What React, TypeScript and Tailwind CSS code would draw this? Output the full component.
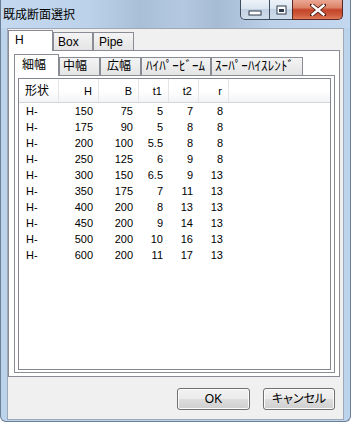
import React from "react";

const rows: string[][] = [
  ["150", "75", "5", "7", "8"],
  ["175", "90", "5", "8", "8"],
  ["200", "100", "5.5", "8", "8"],
  ["250", "125", "6", "9", "8"],
  ["300", "150", "6.5", "9", "13"],
  ["350", "175", "7", "11", "13"],
  ["400", "200", "8", "13", "13"],
  ["450", "200", "9", "14", "13"],
  ["500", "200", "10", "16", "13"],
  ["600", "200", "11", "17", "13"],
];

function WinButtons() {
  return (
    <div className="flex h-[20px] mr-[7px]">
      <div className="w-[30px] h-[20px] border border-t-0 border-[#3f4d60] rounded-bl-[5px] bg-[linear-gradient(#edf2f8_0%,#dbe5f0_45%,#c3d2e3_50%,#cfdcea_100%)] flex items-center justify-center">
        <svg width="14" height="6" viewBox="0 0 14 6" className="mt-[6px]">
          <rect x="1" y="1" width="12" height="4" fill="#ffffff" stroke="#2f3b4c" strokeWidth="1" />
        </svg>
      </div>
      <div className="w-[22px] h-[20px] border-b border-[#3f4d60] bg-[linear-gradient(#edf2f8_0%,#dbe5f0_45%,#c3d2e3_50%,#cfdcea_100%)] flex items-center justify-center">
        <svg width="11" height="10" viewBox="0 0 11 10">
          <rect x="0.5" y="0.5" width="10" height="9" fill="#2f3b4c" />
          <rect x="1.5" y="1.5" width="8" height="7" fill="#ffffff" />
          <rect x="3" y="4" width="5" height="3" fill="#2f3b4c" />
        </svg>
      </div>
      <div className="w-[51px] h-[20px] border border-t-0 border-[#5a2a22] rounded-br-[5px] bg-[linear-gradient(#eba895_0%,#dc8267_40%,#c44529_52%,#cf5a3c_80%,#e07c5c_100%)] flex items-center justify-center">
        <svg width="16" height="12" viewBox="0 0 16 12">
          <path d="M2 1 L14 11 M14 1 L2 11" stroke="#4a1c14" strokeWidth="4" strokeLinecap="square" />
          <path d="M2.5 1.5 L13.5 10.5 M13.5 1.5 L2.5 10.5" stroke="#ffffff" strokeWidth="2.4" strokeLinecap="square" />
        </svg>
      </div>
    </div>
  );
}

function OuterTab({ label, selected, w, pl }: { label: string; selected?: boolean; w: string; pl: string }) {
  if (selected) {
    return (
      <div className={`${w} h-[21px] -mb-px relative z-10 border border-b-0 border-[#898c95] bg-white pt-[2px] ${pl} leading-[14px] text-[12px]`}>
        {label}
      </div>
    );
  }
  return (
    <div className={`${w} h-[18px] border border-b-0 border-[#898c95] bg-[linear-gradient(#f4f4f4,#e4e4e4)] pt-[2px] ${pl} leading-[14px] text-[12px]`}>
      {label}
    </div>
  );
}

function InnerTab({ label, selected, w, pl, extra = "text-[12px]" }: { label: string; selected?: boolean; w: string; pl: string; extra?: string }) {
  if (selected) {
    return (
      <div className={`${w} h-[22px] -mb-px relative z-10 border border-b-0 border-[#898c95] bg-white pt-[3px] ${pl} leading-[14px] text-[12px] whitespace-nowrap`}>
        {label}
      </div>
    );
  }
  return (
    <div className={`${w} h-[18px] border border-b-0 border-[#898c95] bg-[linear-gradient(#f4f4f4,#e4e4e4)] ${pl} ${extra} leading-[16px] whitespace-nowrap overflow-hidden`}>
      {label}
    </div>
  );
}

function ListView() {
  const cols = ["w-[40px]", "w-[40px]", "w-[40px]", "w-[30px]", "w-[30px]", "w-[30px]"];
  const heads = ["形状", "H", "B", "t1", "t2", "r"];
  return (
    <div className="w-[313px] h-[292px] border border-[#828790] bg-white flex flex-col overflow-hidden">
      <div className="h-[24px] flex border-b border-[#d5d5d5] bg-[linear-gradient(#ffffff_0%,#ffffff_50%,#f3f4f6_100%)]">
        {heads.map((h, i) => (
          <div
            key={h}
            className={`${cols[i]} h-full border-r border-[#e3e5e8] pt-[5px] leading-[14px] ${
              i === 0 ? "pl-[6px] text-[12px]" : "text-right pr-[6px] text-[11px]"
            }`}
          >
            {h}
          </div>
        ))}
        <div className="flex-1" />
      </div>
      {rows.map((r, ri) => (
        <div key={ri} className="h-[16px] flex leading-[16px] text-[11px]">
          <div className={`${cols[0]} pl-[7px]`}>H-</div>
          {r.map((v, i) => (
            <div key={i} className={`${cols[i + 1]} text-right pr-[6px]`}>
              {v}
            </div>
          ))}
        </div>
      ))}
    </div>
  );
}

function Button({ label, w }: { label: string; w: string }) {
  return (
    <div
      className={`${w} h-[22px] rounded-[3px] border border-[#707070] bg-[linear-gradient(#f2f2f2_0%,#ebebeb_48%,#dddddd_52%,#cfcfcf_100%)] shadow-[inset_0_0_0_1px_#fcfcfc] flex items-center justify-center text-[12px] leading-[14px]`}
    >
      {label}
    </div>
  );
}

export default function App() {
  return (
    <div className="w-[351px] h-[422px] overflow-hidden flex flex-col border-x border-b border-[#6a7f98] rounded-b-[6px] bg-[#bcd3ec] font-['Liberation_Sans','Noto_Sans_CJK_JP',sans-serif] text-black [font-feature-settings:'palt']">
      <div className="h-[28px] flex justify-between bg-[linear-gradient(90deg,#c4d9ef_0%,#bcd2ea_25%,#a9bfd8_40%,#b4c9e1_52%,#a6bbd4_62%,#bdd2ea_78%,#c3d8ef_100%)]">
        <div className="pl-[2px] pt-[8px] leading-[14px] text-[12px] [font-feature-settings:normal]">既成断面選択</div>
        <WinButtons />
      </div>
      <div className="flex-1 flex flex-col px-[6px] pb-[1px]">
        <div className="flex-1 border border-[#9ea8b6] bg-[#f0f0f0] flex flex-col pt-[1px]">
          <div className="h-[20px] flex items-end">
            <OuterTab label="H" selected w="w-[45px]" pl="pl-[6px]" />
            <OuterTab label="Box" w="w-[40px]" pl="pl-[4px]" />
            <OuterTab label="Pipe" w="w-[41px]" pl="pl-[5px]" />
          </div>
          <div className="w-[332px] h-[327px] border border-[#898c95] bg-white flex flex-col pt-[3px] pl-[5px]">
            <div className="h-[21px] flex items-end">
              <InnerTab label="細幅" selected w="w-[45px]" pl="pl-[7px]" />
              <InnerTab label="中幅" w="w-[41px]" pl="pl-[3px]" />
              <InnerTab label="広幅" w="w-[41px]" pl="pl-[6px]" />
              <InnerTab label="ﾊｲﾊﾟｰﾋﾞｰﾑ" w="w-[70px]" pl="pl-[4px]" extra="text-[13px] tracking-[0.1px]" />
              <InnerTab label="ｽｰﾊﾟｰﾊｲｽﾚﾝﾄﾞ" w="w-[92px]" pl="pl-[3px]" extra="text-[13px] tracking-[0.1px] border-r" />
            </div>
            <div className="w-[321px] h-[298px] border border-[#898c95] bg-white pt-[2px] pl-[3px]">
              <ListView />
            </div>
          </div>
          <div className="flex justify-end gap-[13px] pr-[8px] mt-[11px]">
            <Button label="OK" w="w-[73px]" />
            <Button label="キャンセル" w="w-[72px]" />
          </div>
        </div>
      </div>
    </div>
  );
}
